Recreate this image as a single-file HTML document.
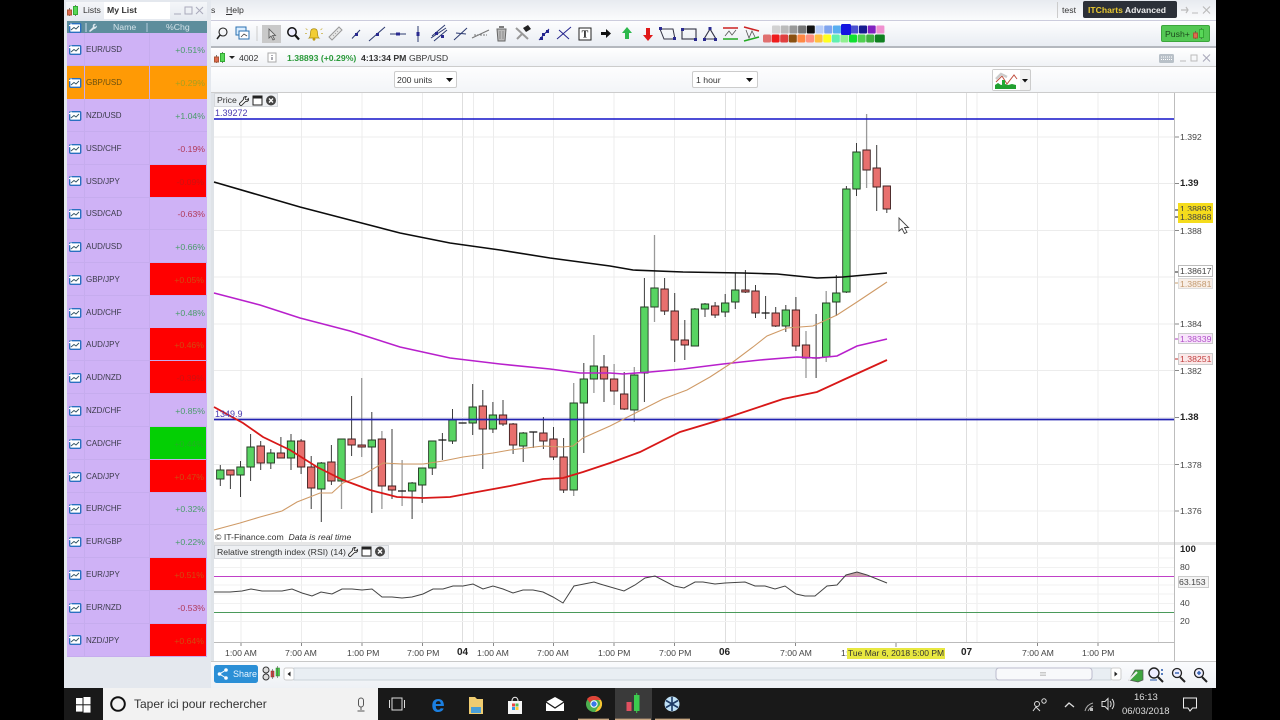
<!DOCTYPE html>
<html><head><meta charset="utf-8"><title>ITCharts</title>
<style>
html,body{margin:0;padding:0;background:#000;width:1280px;height:720px;overflow:hidden}
body{font-family:"Liberation Sans",sans-serif;font-size:9px;color:#333;position:relative}
#app{position:absolute;left:0;top:0;width:1280px;height:720px;overflow:hidden;filter:blur(.35px)}
.a{position:absolute}
.t{position:absolute;white-space:nowrap;line-height:12px;font-size:8.7px}
.r{position:absolute;left:67px;width:140px;height:33px;border-bottom:1px solid #c6acee;box-sizing:border-box}
.r b{position:absolute;left:19px;top:11px;font-weight:normal;font-size:8px;line-height:12px;color:#3a3a4a}
.r i{position:absolute;right:2px;top:11px;font-style:normal;font-size:8.7px;line-height:12px}
.r s{position:absolute;left:82px;top:0;width:57px;height:32px;text-decoration:none}
.g{color:#4a9c6a}.n{color:#b03a5a}
.ax{font-size:8.7px;color:#444}
</style></head><body>
<div id="app">
<!-- window base -->
<div class="a" style="left:64px;top:0;width:1152px;height:688px;background:#e4e8ee"></div>
<!-- left panel -->
<div class="a" style="left:66px;top:2px;width:141px;height:18px;background:linear-gradient(#f4f6f9,#e6eaf0)"></div>
<div class="a" style="left:104px;top:2px;width:66px;height:17px;background:#fff"></div>
<span class="t" style="left:83px;top:4px">Lists</span>
<span class="t" style="left:107px;top:4px;font-weight:bold">My List</span>
<div class="a" style="left:67px;top:21px;width:140px;height:12px;background:#5d8d9c"></div>
<span class="t" style="left:113px;top:21px;color:#d5e4ea">Name</span>
<span class="t" style="left:166px;top:21px;color:#d5e4ea">%Chg</span>
<div class="a" style="left:67px;top:33px;width:140px;height:624px;background:#cfb2f6"></div>

<div class="r" style="top:33px"><b>EUR/USD</b><i class="g">+0.51%</i></div>
<div class="r" style="top:66px;background:#ff9a05;border-color:#ff9a05"><b style="color:#6a5010">GBP/USD</b><i style="color:#a8a020">+0.29%</i></div>
<div class="r" style="top:99px"><b>NZD/USD</b><i class="g">+1.04%</i></div>
<div class="r" style="top:132px"><b>USD/CHF</b><i class="n">-0.19%</i></div>
<div class="r" style="top:165px"><s style="background:#f00"></s><b>USD/JPY</b><i style="color:#d01010;right:3px">-0.09%</i></div>
<div class="r" style="top:197px"><b>USD/CAD</b><i class="n">-0.63%</i></div>
<div class="r" style="top:230px"><b>AUD/USD</b><i class="g">+0.66%</i></div>
<div class="r" style="top:263px"><s style="background:#f00"></s><b>GBP/JPY</b><i style="color:#d04a10;right:3px">+0.05%</i></div>
<div class="r" style="top:296px"><b>AUD/CHF</b><i class="g">+0.48%</i></div>
<div class="r" style="top:328px"><s style="background:#f00"></s><b>AUD/JPY</b><i style="color:#d04a10;right:3px">+0.46%</i></div>
<div class="r" style="top:361px"><s style="background:#f00"></s><b>AUD/NZD</b><i style="color:#d01010;right:3px">-0.39%</i></div>
<div class="r" style="top:394px"><b>NZD/CHF</b><i class="g">+0.85%</i></div>
<div class="r" style="top:427px"><s style="background:#04cf04"></s><b>CAD/CHF</b><i style="color:#22b022;right:3px">+0.44%</i></div>
<div class="r" style="top:460px"><s style="background:#f00"></s><b>CAD/JPY</b><i style="color:#d04a10;right:3px">+0.47%</i></div>
<div class="r" style="top:492px"><b>EUR/CHF</b><i class="g">+0.32%</i></div>
<div class="r" style="top:525px"><b>EUR/GBP</b><i class="g">+0.22%</i></div>
<div class="r" style="top:558px"><s style="background:#f00"></s><b>EUR/JPY</b><i style="color:#d04a10;right:3px">+0.51%</i></div>
<div class="r" style="top:591px"><b>EUR/NZD</b><i class="n">-0.53%</i></div>
<div class="r" style="top:624px"><s style="background:#f00"></s><b>NZD/JPY</b><i style="color:#d04a10;right:3px">+0.64%</i></div>
<div class="a" style="left:84px;top:33px;width:1px;height:624px;background:#c6acee"></div>
<div class="a" style="left:149px;top:33px;width:1px;height:624px;background:#c6acee"></div>

<!-- main area -->
<div class="a" style="left:211px;top:0;width:1005px;height:20px;background:linear-gradient(#e8ebf0,#fbfcfd)"></div>
<div class="a" style="left:211px;top:20px;width:1005px;height:27px;background:linear-gradient(#fdfdfe,#e8ecf2);border-top:1px solid #ccd;box-sizing:border-box"></div>
<div class="a" style="left:211px;top:46px;width:1005px;height:2px;background:#b4b8be"></div>
<div class="a" style="left:211px;top:48px;width:1005px;height:19px;background:linear-gradient(#fff,#f0f2f6);border-bottom:1px solid #ccc;box-sizing:border-box"></div>
<div class="a" style="left:211px;top:67px;width:1005px;height:26px;background:linear-gradient(#fdfdfe,#f3f5f8);border-bottom:1px solid #ccc;box-sizing:border-box"></div>
<div class="a" style="left:211px;top:93px;width:1005px;height:595px;background:#fff"></div>
<div class="a" style="left:211px;top:93px;width:3px;height:568px;background:#dfe3e8"></div>
<div class="a" style="left:211px;top:661px;width:1005px;height:27px;background:linear-gradient(#fafbfd,#eef1f5);border-top:1px solid #c8c8c8;box-sizing:border-box"></div>
<div class="a" style="left:214px;top:542px;width:1002px;height:3px;background:#e6e6e6"></div>

<span class="t" style="left:211px;top:4px">s</span>
<span class="t" style="left:226px;top:4px"><u>H</u>elp</span>
<span class="t" style="left:1062px;top:4px">test</span>
<div class="a" style="left:1057px;top:2px;width:1px;height:16px;background:#ccc"></div>
<div class="a" style="left:1083px;top:1px;width:94px;height:17px;background:#2c3038;border-radius:2px"></div>
<span class="t" style="left:1088px;top:4px;color:#eee;font-weight:bold;font-size:8.6px"><span style="color:#e8c830">ITCharts</span> Advanced</span>
<div class="a" style="left:1161px;top:25px;width:49px;height:17px;background:#54c854;border-radius:2px;border:1px solid #3ca63c;box-sizing:border-box"></div>
<span class="t" style="left:1165px;top:28px;color:#1c4a1c">Push+</span>

<!-- chart header -->
<span class="t" style="left:239px;top:52px">4002</span>
<span class="t" style="left:287px;top:52px;color:#2a9a3a;font-weight:bold">1.38893 (+0.29%)</span>
<span class="t" style="left:361px;top:52px;font-weight:bold">4:13:34 PM</span>
<span class="t" style="left:409px;top:52px">GBP/USD</span>

<div class="a" style="left:394px;top:71px;width:63px;height:17px;background:#fff;border:1px solid #ccc;border-radius:2px;box-sizing:border-box"></div>
<span class="t" style="left:397px;top:74px">200 units</span>
<div class="a" style="left:692px;top:71px;width:66px;height:17px;background:#fff;border:1px solid #ccc;border-radius:2px;box-sizing:border-box"></div>
<span class="t" style="left:696px;top:74px">1 hour</span>
<div class="a" style="left:992px;top:69px;width:39px;height:22px;background:#f2f2f2;border:1px solid #ccc;border-radius:2px;box-sizing:border-box"></div>
<div class="a" style="left:993px;top:70px;width:27px;height:20px;background:#fff"></div>

<!-- big svg -->
<svg class="a" style="left:0;top:0" width="1280" height="720" viewBox="0 0 1280 720" fill="none">
<defs>
<g id="ri"><rect x="0.7" y="0.7" width="11" height="8.6" rx="1" fill="#fff" stroke="#2a70c0" stroke-width="1.4"/><path d="M2 7 5 4.5 7 6 10 3" stroke="#356" stroke-width=".9"/><path d="M0 2.5h4M2 .5v4" stroke="#fff" stroke-width="1.3"/></g>
<g id="cnd"><path d="M2.5 3v8M8.5 0v11" stroke="#555" stroke-width=".8"/><rect x="0.5" y="5" width="4" height="5" fill="#e06a50" stroke="#a53"/><rect x="6.5" y="1.5" width="4" height="8" fill="#58d858" stroke="#3a3"/></g>
</defs>

<!-- row icons -->
<use href="#ri" x="69" y="23"/>
<use href="#ri" x="69" y="45"/><use href="#ri" x="69" y="78"/><use href="#ri" x="69" y="111"/><use href="#ri" x="69" y="144"/><use href="#ri" x="69" y="176"/><use href="#ri" x="69" y="209"/><use href="#ri" x="69" y="242"/><use href="#ri" x="69" y="275"/><use href="#ri" x="69" y="308"/><use href="#ri" x="69" y="340"/><use href="#ri" x="69" y="373"/><use href="#ri" x="69" y="406"/><use href="#ri" x="69" y="439"/><use href="#ri" x="69" y="472"/><use href="#ri" x="69" y="504"/><use href="#ri" x="69" y="537"/><use href="#ri" x="69" y="570"/><use href="#ri" x="69" y="603"/><use href="#ri" x="69" y="635"/>
<use href="#cnd" x="67" y="5"/>
<path d="M86 23v9" stroke="#cde"/><path d="M89 31 93 27C92 25 94 23 96 24L94 26 95 27 97 25.5C97 28 95 29 94 29L90 32z" fill="#dde8ee"/><path d="M147 23v9" stroke="#cde" stroke-width=".8"/>
<path d="M174 14h7" stroke="#aab" stroke-width="1"/><rect x="185" y="7" width="7" height="7" stroke="#aab"/><path d="M196 7 203 14M203 7 196 14" stroke="#aab" stroke-width="1"/>

<!-- toolbar icons -->
<circle cx="223" cy="32" r="4" stroke="#222" stroke-width="1.1"/><path d="M220 35 217 39" stroke="#222" stroke-width="1.5"/>
<rect x="236" y="27" width="10" height="8" fill="#dbeeff" stroke="#2a70b0"/><rect x="239" y="31" width="10" height="8" fill="#fff" stroke="#2a70b0"/><path d="M241 37 244 34 247 36" stroke="#444" stroke-width=".8"/>
<path d="M257 26v15" stroke="#ccc"/>
<rect x="262" y="25" width="19" height="18" fill="#c9c9c9"/>
<path d="M269 29v9l2-2 2 4 1.5-.8-2-3.7h3z" fill="#ddd" stroke="#555" stroke-width=".8"/>
<circle cx="292" cy="32" r="4.2" fill="#eef" stroke="#111" stroke-width="1.5"/><path d="M295 35 299 39.5" stroke="#111" stroke-width="2.2"/>
<path d="M309 38c1.8-1 1.2-5 1.8-7 .6-3 5.8-3 6.4 0 .6 2 0 6 1.8 7z" fill="#f2cd35" stroke="#a88a10" stroke-width=".7"/><circle cx="314" cy="39.2" r="1.4" fill="#c09a10"/><path d="M307.5 30l-1.8-1.5M320.5 30l1.8-1.5M307 33.5h-2M321 33.5h2" stroke="#c9b040" stroke-width=".8"/>
<path d="M329 37 339 27 342 30 332 40z" fill="#e8e8e8" stroke="#999"/><path d="M333 35l1 1M335 33l1 1M337 31l1 1" stroke="#999" stroke-width=".7"/>
<g stroke="#2c3a70" stroke-width="1"><path d="M352 38.5 360 30"/><path d="M369 41 385 27"/><path d="M390 34H406"/><path d="M418 26V42"/>
<path d="M432 36 445 25M434 41 447 30M431 38 446 28"/><path d="M454 40 467 28M456 33 466 34"/></g>
<path d="M472 38 489 30" stroke="#777" stroke-width="1"/><path d="M474 35 487 35" stroke="#777" stroke-width="1" stroke-dasharray="2 1"/>
<g fill="#2a2a90"><rect x="355" y="33" width="3" height="3"/><rect x="376" y="33" width="3" height="3"/><rect x="396" y="32.5" width="4" height="3"/><rect x="416.5" y="32" width="3" height="4"/><rect x="435" y="32" width="3" height="3"/><rect x="441" y="35" width="3" height="3"/></g>
<path d="M497 29h9l-1 12h-7z" fill="#bbb" stroke="#666"/><path d="M499 27h5" stroke="#555" stroke-width="1.5"/><path d="M500 31v8M503 31v8" stroke="#777" stroke-width=".7"/>
<path d="M516 28 528 39M517 39 522 34" stroke="#999" stroke-width="2"/><path d="M523 28l5-3 3 4-5 3z" fill="#222"/>
<g stroke="#24248e" stroke-width="1"><path d="M539 40 549 29"/><path d="M557 39 571 27M559 30 569 39"/></g><rect x="542" y="33" width="3" height="3" fill="#24248e"/><rect x="540" y="37" width="3" height="3" fill="#24248e"/><rect x="546" y="30" width="3" height="3" fill="#24248e"/>
<rect x="579" y="28" width="12" height="12" fill="#fff" stroke="#222"/><text x="585" y="37.5" text-anchor="middle" font-family="Liberation Serif" font-size="10" font-weight="bold" fill="#111">T</text>
<path d="M601 32h5v-3l5 4.5-5 4.5v-3h-5z" fill="#111"/>
<path d="M627 27l5 6h-3v6h-4v-6h-3z" fill="#2cb84c"/>
<path d="M648 41l-5-6h3v-7h4v7h3z" fill="#e01818"/>
<path d="M660 29h13l2 10h-11z" stroke="#334" stroke-width="1"/><rect x="659" y="27" width="3" height="3" fill="#2a2a90"/><rect x="673" y="37" width="3" height="3" fill="#2a2a90"/>
<rect x="682" y="29" width="14" height="10" stroke="#334" stroke-width="1.1"/><rect x="681" y="28" width="3" height="3" fill="#2a2a90"/><rect x="694" y="38" width="3" height="3" fill="#2a2a90"/>
<path d="M710 29 704 39H716z" stroke="#334" stroke-width="1.1"/><rect x="708.5" y="27" width="3" height="3" fill="#2a2a90"/><rect x="703" y="38" width="3" height="3" fill="#2a2a90"/><rect x="714" y="38" width="3" height="3" fill="#2a2a90"/>
<path d="M723 28h15" stroke="#c22" stroke-width="1.5"/><path d="M723 39h15" stroke="#2a2" stroke-width="1.5"/><path d="M725 36 729 31 732 35 736 30" stroke="#555" stroke-width=".8"/>
<path d="M744 27 759 31" stroke="#c22" stroke-width="1.5"/><path d="M744 41 759 37" stroke="#2a2" stroke-width="1.5"/><path d="M746 30 749 38 752 31 755 37" stroke="#555" stroke-width=".8"/>

<!-- palette -->
<g>
<rect x="772" y="25.5" width="8" height="8" rx="1" fill="#d2d2d2"/><rect x="780.7" y="25.5" width="8" height="8" rx="1" fill="#bbb"/><rect x="789.4" y="25.5" width="8" height="8" rx="1" fill="#999"/><rect x="798.1" y="25.5" width="8" height="8" rx="1" fill="#777"/><rect x="806.8" y="25.5" width="8" height="8" rx="1" fill="#111"/><rect x="815.5" y="25.5" width="8" height="8" rx="1" fill="#b8cdf8"/><rect x="824.2" y="25.5" width="8" height="8" rx="1" fill="#7fa4ee"/><rect x="832.9" y="25.5" width="8" height="8" rx="1" fill="#58aef0"/><rect x="850.3" y="25.5" width="8" height="8" rx="1" fill="#4a50d0"/><rect x="859" y="25.5" width="8" height="8" rx="1" fill="#161a90"/><rect x="867.7" y="25.5" width="8" height="8" rx="1" fill="#8020c0"/><rect x="876.4" y="25.5" width="8" height="8" rx="1" fill="#f090d0"/>
<rect x="763" y="34.5" width="8" height="8" rx="1.5" fill="#e07070"/><rect x="771.6" y="34.5" width="8" height="8" rx="1.5" fill="#ee1c1c"/><rect x="780.2" y="34.5" width="8" height="8" rx="1.5" fill="#e04040"/><rect x="788.8" y="34.5" width="8" height="8" rx="1.5" fill="#8a5010"/><rect x="797.4" y="34.5" width="8" height="8" rx="1.5" fill="#ff8844"/><rect x="806" y="34.5" width="8" height="8" rx="1.5" fill="#ff9080"/><rect x="814.6" y="34.5" width="8" height="8" rx="1.5" fill="#ffc040"/><rect x="823.2" y="34.5" width="8" height="8" rx="1.5" fill="#ffff20"/><rect x="831.8" y="34.5" width="8" height="8" rx="1.5" fill="#60f0b0"/><rect x="840.4" y="34.5" width="8" height="8" rx="1.5" fill="#90f090"/><rect x="849" y="34.5" width="8" height="8" rx="1.5" fill="#10e030"/><rect x="857.6" y="34.5" width="8" height="8" rx="1.5" fill="#50d050"/><rect x="866.2" y="34.5" width="8" height="8" rx="1.5" fill="#40b040"/><rect x="874.8" y="34.5" width="10" height="8" rx="1.5" fill="#108020"/>
<rect x="841" y="24" width="10" height="11" rx="1.5" fill="#1414e0"/>
</g>

<!-- right title icons -->
<path d="M1181 10h7M1186 7l2 3-2 3" stroke="#bbb" stroke-width="1.2"/><path d="M1192 13h6" stroke="#bbb"/><path d="M1203 6.5 1210 13.5M1210 6.5 1203 13.5" stroke="#bbb" stroke-width="1.2"/>
<use href="#cnd" x="1193" y="28"/>
<rect x="1159" y="54" width="15" height="9" rx="1.5" fill="#b8c0c8"/><path d="M1161 57h11M1161 59.5h11" stroke="#fff" stroke-dasharray="1 1"/>
<path d="M1180 61h6" stroke="#bbb"/><rect x="1191" y="55" width="6" height="6" stroke="#bbb"/><path d="M1203 54.5 1210 61.5M1210 54.5 1203 61.5" stroke="#aab" stroke-width="1.1"/>
<use href="#cnd" x="214" y="52"/>
<path d="M229 56h6l-3 3z" fill="#222"/>
<rect x="268" y="53" width="8" height="9" fill="#fff" stroke="#aaa"/><path d="M272 55v1M272 57v3" stroke="#556"/>
<path d="M446 78h7l-3.5 4z" fill="#111"/><path d="M746 78h7l-3.5 4z" fill="#111"/><path d="M1022 79h6l-3 3.5z" fill="#111"/>
<path d="M995 85l3-2 3 2 4-1 3 1 4-1 4 1v4h-21z" fill="#22a030"/><path d="M996 82 1002 76 1007 84 1014 75 1017 79" stroke="#c05040" stroke-width="1"/><path d="M996 79 1001 74 1007 77" stroke="#ccc" stroke-width="2.5"/><rect x="1002" y="80" width="3" height="6" fill="#2a3"/>

<!-- grid -->
<g stroke="#ececec" stroke-width="1">
<path d="M241 93V542M301.5 93V542M362 93V542M422.5 93V542M473.5 93V542M493.5 93V542M553.5 93V542M614 93V542M674.5 93V542M735.5 93V542M795.5 93V542M856.5 93V542M916.5 93V542M977 93V542M1037.5 93V542M1098 93V542M1158.5 93V542"/>
<path d="M462.5 93V542M725.5 93V542M966.5 93V542" stroke="#dedede"/>
<path d="M214 137H1175M214 183.5H1175M214 230.5H1175M214 277H1175M214 324H1175M214 370.5H1175M214 417.5H1175M214 464.5H1175M214 511H1175"/>
<path d="M241 545V643M301.5 545V643M362 545V643M422.5 545V643M473.5 545V643M493.5 545V643M553.5 545V643M614 545V643M674.5 545V643M735.5 545V643M795.5 545V643M856.5 545V643M916.5 545V643M977 545V643M1037.5 545V643M1098 545V643M1158.5 545V643"/>
<path d="M462.5 545V643M725.5 545V643M966.5 545V643" stroke="#dedede"/>
<path d="M214 558H1175M214 567.5H1175M214 585H1175M214 594H1175M214 603.5H1175M214 621.5H1175" stroke="#f1f1f1"/>
</g>
<path d="M1174.5 93V661" stroke="#bdbdbd"/>
<path d="M214 642.5H1175" stroke="#bbb"/>
<path d="M1175 137h4M1175 183.5h4M1175 230.5h4M1175 324h4M1175 370.5h4M1175 417.5h4M1175 464.5h4M1175 511h4" stroke="#888"/>
<path d="M1175 272h4" stroke="#222"/><path d="M1175 283h4" stroke="#c9a070"/><path d="M1175 339h4" stroke="#b040c0"/><path d="M1175 359h4" stroke="#c03030"/><path d="M1175 210h4M1175 217h4" stroke="#222"/>
<path d="M241 643v3M301.5 643v3M362 643v3M422.5 643v3M493.5 643v3M553.5 643v3M614 643v3M674.5 643v3M795.5 643v3M896 643v4M1037.5 643v3M1098 643v3" stroke="#888"/>

<!-- candles -->
<path stroke="#3c3c3c" stroke-width="1" d="M220.3 465V486M230.4 470V489M240.5 461V497M250.6 434V481M260.7 441V470M270.8 449V469M280.9 437V458M291 434V470M301.1 439V474M311.2 456V509M321.3 462V522M331.4 445V485M351.6 396V456M371.8 412V513M392 429V499M412.1 482V519M422.2 468V503M432.3 441V475M442.4 433V460M452.5 409V444M472.7 384V435M482.8 390V469M492.9 402V433M503 400V426M513.1 423V454M523.2 432V462M533.3 432V448M543.4 417V449M553.5 427V460M563.6 438V493M583.8 363V453M604 355V402M624.2 372V410M644.4 278V402M664.6 278V315M674.7 293V362M684.8 320V360M694.9 308V346M705 303V317M715.1 302V318M725.2 294V317M735.3 273V309M745.4 270V293M755.5 285V318M765.6 296V319M775.7 307V327M785.8 305V332M795.9 297V351M816.1 314V378M836.3 275V316M846.4 186V293M856.5 143V196M876.7 145V211M886.8 186V213"/>
<path stroke="#999" stroke-width="1.3" d="M341.5 439V509M361.7 378V457M381.9 431V509M402.1 460V506M573.7 383V496M593.9 335V393M614.1 364V405M634.3 367V422M654.5 235V322M806 331V378M826.2 291V362M866.6 114V188"/>
<path fill="#58d462" stroke="#223a22" stroke-width=".9" d="M216.6 470h7.4v9h-7.4zM236.8 467h7.4v8h-7.4zM246.9 447h7.4v20h-7.4zM267.1 453h7.4v10h-7.4zM287.3 441h7.4v17h-7.4zM317.6 463h7.4v26h-7.4zM337.8 439h7.4v42h-7.4zM368.1 440h7.4v7h-7.4zM408.4 483h7.4v8h-7.4zM418.5 468h7.4v17h-7.4zM428.6 441h7.4v27h-7.4zM448.8 420h7.4v21h-7.4zM469 407h7.4v16h-7.4zM489.2 415h7.4v14h-7.4zM519.5 433h7.4v13h-7.4zM570 403h7.4v87h-7.4zM580.1 379h7.4v24h-7.4zM590.2 366h7.4v13h-7.4zM630.6 375h7.4v35h-7.4zM640.7 307h7.4v66h-7.4zM650.8 288h7.4v19h-7.4zM691.2 309h7.4v37h-7.4zM701.3 304h7.4v5h-7.4zM721.5 303h7.4v9h-7.4zM731.6 290h7.4v12h-7.4zM782.1 310h7.4v16h-7.4zM822.5 303h7.4v54h-7.4zM832.6 293h7.4v9h-7.4zM842.7 189h7.4v103h-7.4zM852.8 152h7.4v37h-7.4z"/>
<path fill="#e8706e" stroke="#3f2020" stroke-width=".9" d="M226.7 470h7.4v5h-7.4zM257 446h7.4v17h-7.4zM277.2 453h7.4v5h-7.4zM297.4 441h7.4v26h-7.4zM307.5 467h7.4v21h-7.4zM327.7 462h7.4v19h-7.4zM347.9 439h7.4v6h-7.4zM358 445h7.4v2h-7.4zM378.2 439h7.4v47h-7.4zM388.3 486h7.4v4h-7.4zM479.1 406h7.4v23h-7.4zM499.3 415h7.4v9h-7.4zM509.4 424h7.4v21h-7.4zM539.7 433h7.4v8h-7.4zM549.8 439h7.4v18h-7.4zM559.9 457h7.4v33h-7.4zM600.3 367h7.4v12h-7.4zM610.4 379h7.4v12h-7.4zM620.5 394h7.4v15h-7.4zM660.9 289h7.4v22h-7.4zM671 311h7.4v29h-7.4zM681.1 340h7.4v5h-7.4zM711.4 306h7.4v9h-7.4zM741.7 290h7.4v2h-7.4zM751.8 291h7.4v22h-7.4zM772 313h7.4v13h-7.4zM792.2 310h7.4v36h-7.4zM802.3 345h7.4v13h-7.4zM862.9 150h7.4v20h-7.4zM873 168h7.4v19h-7.4zM883.1 186h7.4v23h-7.4z"/>
<path stroke="#111" stroke-width="1.2" d="M398 491h8M438.4 440h8M458.6 423h8M529.3 432h8M761.6 313h8M812.1 358h8"/>

<!-- lines -->
<path d="M214 119H1174" stroke="#1212c8" stroke-width="1.6"/>
<path d="M214 419.5H1174" stroke="#2222b0" stroke-width="1.8"/>
<polyline stroke="#0c0c0c" stroke-width="1.6" points="214,182 300,207 350,220 400,233 450,243 500,250 550,258 610,266 633,270 683,272 743,273 777,274 817,278 843,277 887,273"/>
<polyline stroke="#b820cc" stroke-width="1.6" points="214,293 260,305 300,318 350,331 400,347 450,358 500,364 550,369 580,373 610,373 623,374 650,372 683,369 723,364 760,360 797,357 817,358 837,356 857,346 887,339"/>
<polyline stroke="#cf9a66" stroke-width="1.1" points="214,530 240,523 260,517 282,511 297,502 320,493 332,493 343,483 363,475 383,463 403,464 423,464 443,461 463,457 493,453 510,450 543,446 563,447 573,446 583,438 610,426 663,399 687,390 710,377 733,362 753,347 767,336 787,328 813,326 837,315 857,302 887,282"/>
<polyline stroke="#d81818" stroke-width="1.8" points="214,407 243,423 263,437 290,450 317,467 343,480 370,490 397,497 423,498 450,497 477,492 510,486 543,479 563,478 583,472 610,463 640,452 680,432 720,420 783,399 817,392 843,380 887,360"/>

<!-- RSI -->
<path d="M214 576.5H1174" stroke="#c040c8" stroke-width="1"/>
<path d="M214 612.5H1174" stroke="#4a9a5a" stroke-width="1"/>
<path d="M846 575 856.7 572 866 575 868 576.5H844z" fill="#c8a0a8"/>
<polyline stroke="#444" stroke-width="1" points="214,592 230,592 242,591 251,589 262,591 270,591 282,591 292,589 302,593 312,596 321,592 332,594 342,589 352,589 362,590 372,589 382,597 392,597 402,598 412,597 423,594 433,589 443,589 453,586 463,586 473,584 483,589 493,586 503,589 513,593 523,590 533,590 543,592 553,597 563,603 574,586 584,584 594,582 600,584 624,591 635,585 645,578 655,576 674,586 684,588 695,582 703,582 715,584 725,583 745,582 755,586 765,586 775,589 785,586 796,594 805,596 815,596 827,586 837,585 846,575 857,572 867,575 887,583"/>

<!-- cursor -->
<path d="M899 218V231L902 228.5 904.5 233.5 907 232.3 904.5 227.5 908.5 227.5z" fill="#fff" stroke="#444" stroke-width=".9"/>

<!-- bottom bar icons -->
<rect x="214" y="665" width="44" height="18" rx="2.5" fill="#2b8fd6"/>
<circle cx="219.5" cy="674" r="1.8" fill="#fff"/><circle cx="226" cy="670" r="1.8" fill="#fff"/><circle cx="226" cy="678" r="1.8" fill="#fff"/><path d="M226 670 219.5 674 226 678" stroke="#fff"/>
<circle cx="266" cy="670" r="3" fill="#ddd" stroke="#333"/><circle cx="266" cy="677" r="3" fill="#ddd" stroke="#333"/>
<rect x="271" y="671" width="3" height="6" fill="#d44" stroke="#822" stroke-width=".5"/><rect x="276" y="668" width="3.5" height="8" fill="#4c4" stroke="#282" stroke-width=".5"/><path d="M272.5 669v10M277.7 666v12" stroke="#555" stroke-width=".6"/>
<rect x="284" y="668" width="10" height="12" rx="2" fill="#fff" stroke="#ccc"/><path d="M290.5 671.5v5l-3-2.5z" fill="#222"/>
<rect x="294" y="668" width="817" height="12" fill="#e9eef3" stroke="#ccd3da"/>
<rect x="996" y="668" width="96" height="12" rx="3" fill="#f8f9fb" stroke="#bbc"/><path d="M1040 672.5h6M1040 674h6M1040 675.5h6" stroke="#bbb" stroke-width=".7"/>
<rect x="1111" y="668" width="10" height="12" rx="2" fill="#fff" stroke="#ccc"/><path d="M1114.5 671.5v5l3-2.5z" fill="#222"/>
<path d="M1129 680 1135 670h8v10l-5 2z" fill="#3fa53f" stroke="#555" stroke-width=".7"/><path d="M1129 680 1137 672" stroke="#eee" stroke-width="2"/>
<circle cx="1154" cy="673" r="5" fill="#eef" stroke="#222" stroke-width="1.4"/><path d="M1158 677 1163 682" stroke="#222" stroke-width="2"/><path d="M1162 669v8" stroke="#25a" stroke-dasharray="2 2" stroke-width="1.5"/><path d="M1150 680h7" stroke="#25a"/>
<circle cx="1177" cy="673" r="4.5" fill="#eef" stroke="#222" stroke-width="1.3"/><path d="M1180 677 1185 682" stroke="#222" stroke-width="2"/><path d="M1175 673h4" stroke="#25a" stroke-width="1.3"/>
<circle cx="1199" cy="673" r="4.5" fill="#eef" stroke="#222" stroke-width="1.3"/><path d="M1202 677 1207 682" stroke="#222" stroke-width="2"/><path d="M1197 673h4M1199 671v4" stroke="#25a" stroke-width="1.3"/>

<!-- taskbar -->
<rect x="64" y="688" width="1148" height="32" fill="#191919"/>
<rect x="103" y="688" width="275" height="32" fill="#f2f2f2"/>
<rect x="615" y="688" width="37" height="32" fill="#3a3a3a"/>
<rect x="76" y="698" width="6.5" height="6.3" fill="#fff"/><rect x="83.5" y="697" width="7" height="7.3" fill="#fff"/><rect x="76" y="705.3" width="6.5" height="6.3" fill="#fff"/><rect x="83.5" y="705.3" width="7" height="7.3" fill="#fff"/>
<circle cx="118" cy="704" r="6.8" stroke="#111" stroke-width="2"/>
<rect x="358.5" y="698" width="5" height="9" rx="2.5" stroke="#555"/><path d="M361 707v3M357.5 711h7" stroke="#555"/>
<rect x="392" y="698" width="10" height="12" stroke="#ddd"/><path d="M389.5 700v8M404.5 700v8" stroke="#ddd"/>
<text x="438" y="712" text-anchor="middle" font-family="Liberation Sans" font-weight="bold" font-size="24" fill="#1b7fe0">e</text>
<path d="M469 697h6l2 2h6v15h-14z" fill="#f0cc70"/><rect x="471" y="707" width="10" height="6" fill="#4a9fd8"/>
<path d="M508 701h14v13h-14z" fill="#f5f5f5"/><path d="M512 701c0-5 6-5 6 0" stroke="#eee"/><rect x="512" y="703.5" width="3" height="3" fill="#e44"/><rect x="515.5" y="703.5" width="3" height="3" fill="#5b5"/><rect x="512" y="707" width="3" height="3" fill="#39e"/><rect x="515.5" y="707" width="3" height="3" fill="#fc3"/>
<path d="M546 702 555 697 564 702V711H546z" fill="#fff"/><path d="M546 702 555 708 564 702" stroke="#191919" stroke-width="1.3"/>
<circle cx="594" cy="704" r="8" fill="#4caf50"/><path d="M594 696a8 8 0 0 1 7 4h-7a4 4 0 0 0-4 3l-3-4a8 8 0 0 1 7-3z" fill="#e04438"/><path d="M601 700a8 8 0 0 1-6 12l3-5a4 4 0 0 0 0-7z" fill="#f7c531"/><circle cx="594" cy="704" r="3.2" fill="#3a78e8" stroke="#fff"/>
<rect x="626.5" y="702" width="5" height="9" fill="#e05060"/><rect x="634" y="695" width="5.5" height="16" fill="#3ccb4e"/><path d="M636.7 693v20" stroke="#3ccb4e"/>
<circle cx="672" cy="704" r="7.5" fill="#bfe0f6"/><path d="M672 697v14M666 700.5 678 707.5M678 700.5 666 707.500" stroke="#1d3a66" stroke-width="1.6"/>
<path d="M578 719.3h31M615 719.3h36M655 719.3h35" stroke="#c9a782" stroke-width="1.4"/>
<circle cx="1037" cy="704" r="2.5" stroke="#ddd"/><circle cx="1044" cy="701" r="2.2" stroke="#ddd"/><path d="M1033 711 1036 707 1040 711" stroke="#ddd"/>
<path d="M1065 707 1069 703 1074 707" stroke="#ddd" stroke-width="1.3"/>
<path d="M1085 711c1-4 4-7 8-8M1088 711c1-2 3-4 5-5" stroke="#aaa"/><rect x="1090" y="708" width="3" height="3" fill="#bbb"/>
<path d="M1102 701.5h3l3-3v11l-3-3h-3z" stroke="#ddd"/><path d="M1110 701c1.5 2 1.5 4 0 6M1112 699c2.5 3 2.5 7 0 10" stroke="#ddd"/>
<path d="M1183.5 698h13v10h-4l-2.5 3-2-3h-4.5z" stroke="#eee"/>
</svg>

<!-- chart text -->
<div class="a" style="left:214px;top:93px;width:64px;height:14px;background:#eef0f3;border:1px solid #d5d8dc;box-sizing:border-box"></div>
<span class="t" style="left:217px;top:94px">Price</span>
<svg class="a" style="left:239px;top:95px" width="40" height="11" viewBox="0 0 40 11" fill="none">
<path d="M0 9 4.5 4.5C4 2.5 5.5 1 7.5 1.5L6 3l.5 1.5L8 5l1.5-1.5C10 5.500 8.500 7 6.500 6.500L2 11z" fill="#fff" stroke="#333" stroke-width=".9"/>
<rect x="14" y="1" width="9" height="9" fill="#fff" stroke="#222"/><rect x="14" y="1" width="9" height="2.5" fill="#222"/>
<circle cx="32" cy="5.5" r="5" fill="#444"/><path d="M30 3.5 34 7.5M34 3.5 30 7.5" stroke="#fff" stroke-width="1.4"/></svg>
<span class="t" style="left:215px;top:107px;color:#4a3ab0;font-size:9px">1.39272</span>
<span class="t" style="left:215px;top:408px;color:#4a3ab0;font-size:9px">1349.9</span>
<span class="t" style="left:215px;top:531px;color:#333">© IT-Finance.com&nbsp; <em>Data is real time</em></span>

<div class="a" style="left:214px;top:545px;width:175px;height:14px;background:#eef0f3;border:1px solid #d5d8dc;box-sizing:border-box"></div>
<span class="t" style="left:217px;top:546px">Relative strength index (RSI) (14)</span>
<svg class="a" style="left:348px;top:546px" width="40" height="11" viewBox="0 0 40 11" fill="none">
<path d="M0 9 4.5 4.5C4 2.5 5.5 1 7.5 1.5L6 3l.5 1.5L8 5l1.5-1.5C10 5.5 8.5 7 6.5 6.5L2 11z" fill="#fff" stroke="#333" stroke-width=".9"/>
<rect x="14" y="1" width="9" height="9" fill="#fff" stroke="#222"/><rect x="14" y="1" width="9" height="2.5" fill="#222"/>
<circle cx="32" cy="5.5" r="5" fill="#444"/><path d="M30 3.5 34 7.5M34 3.5 30 7.5" stroke="#fff" stroke-width="1.4"/></svg>

<!-- y axis -->
<span class="t ax" style="left:1180px;top:131px">1.392</span>
<span class="t ax" style="left:1180px;top:178px;font-weight:bold;color:#222;font-size:9.5px">1.39</span>
<span class="t ax" style="left:1180px;top:225px">1.388</span>
<span class="t ax" style="left:1180px;top:318px">1.384</span>
<span class="t ax" style="left:1180px;top:365px">1.382</span>
<span class="t ax" style="left:1180px;top:412px;font-weight:bold;color:#222;font-size:9.5px">1.38</span>
<span class="t ax" style="left:1180px;top:459px">1.378</span>
<span class="t ax" style="left:1180px;top:505px">1.376</span>
<div class="a" style="left:1178px;top:203px;width:35px;height:20px;background:#f5dc1c"></div>
<span class="t ax" style="left:1180px;top:203px;height:8px;overflow:hidden;color:#444">1.38893</span>
<span class="t ax" style="left:1180px;top:211px;color:#444">1.38868</span>
<div class="a" style="left:1178px;top:265px;width:35px;height:12px;background:#fff;border:1px solid #bbb;box-sizing:border-box"></div>
<span class="t ax" style="left:1180px;top:265px">1.38617</span>
<div class="a" style="left:1178px;top:278px;width:35px;height:11px;background:#f8eee6;border:1px solid #ddd;box-sizing:border-box"></div>
<span class="t ax" style="left:1180px;top:278px;color:#c39a70">1.38581</span>
<div class="a" style="left:1178px;top:333px;width:35px;height:11px;background:#f8e4fb;border:1px solid #ccc;box-sizing:border-box"></div>
<span class="t ax" style="left:1180px;top:333px;color:#b050c8">1.38339</span>
<div class="a" style="left:1178px;top:353px;width:35px;height:12px;background:#fbe8e8;border:1px solid #ccc;box-sizing:border-box"></div>
<span class="t ax" style="left:1180px;top:353px;color:#c04040">1.38251</span>
<span class="t ax" style="left:1180px;top:544px;font-weight:bold;color:#222;font-size:9.5px">100</span>
<span class="t ax" style="left:1180px;top:561px">80</span>
<div class="a" style="left:1178px;top:576px;width:31px;height:12px;background:#f4f4f4;border:1px solid #ccc;box-sizing:border-box"></div>
<span class="t ax" style="left:1179px;top:576px">63.153</span>
<span class="t ax" style="left:1180px;top:597px">40</span>
<span class="t ax" style="left:1180px;top:615px">20</span>

<!-- x axis -->
<span class="t ax" style="left:225px;top:647px">1:00 AM</span>
<span class="t ax" style="left:285px;top:647px">7:00 AM</span>
<span class="t ax" style="left:347px;top:647px">1:00 PM</span>
<span class="t ax" style="left:407px;top:647px">7:00 PM</span>
<span class="t ax" style="left:457px;top:647px;font-weight:bold;font-size:10px;color:#222">04</span>
<span class="t ax" style="left:477px;top:647px">1:00 AM</span>
<span class="t ax" style="left:537px;top:647px">7:00 AM</span>
<span class="t ax" style="left:598px;top:647px">1:00 PM</span>
<span class="t ax" style="left:659px;top:647px">7:00 PM</span>
<span class="t ax" style="left:719px;top:647px;font-weight:bold;font-size:10px;color:#222">06</span>
<span class="t ax" style="left:780px;top:647px">7:00 AM</span>
<span class="t ax" style="left:841px;top:647px">1:</span>
<div class="a" style="left:847px;top:648px;width:98px;height:11px;background:#e8e840"></div>
<span class="t ax" style="left:848px;top:647px;color:#333;font-size:8.5px">Tue Mar 6, 2018 5:00 PM</span>
<span class="t ax" style="left:961px;top:647px;font-weight:bold;font-size:10px;color:#222">07</span>
<span class="t ax" style="left:1022px;top:647px">7:00 AM</span>
<span class="t ax" style="left:1082px;top:647px">1:00 PM</span>

<span class="t" style="left:233px;top:668px;color:#e8f4ff;font-size:9px">Share</span>
<span class="t" style="left:134px;top:698px;color:#333;font-size:12px">Taper ici pour rechercher</span>
<span class="t" style="left:1134px;top:692px;color:#ddd;font-size:9.5px">16:13</span>
<span class="t" style="left:1122px;top:706px;color:#ddd;font-size:9.5px">06/03/2018</span>
</div>
</body></html>
